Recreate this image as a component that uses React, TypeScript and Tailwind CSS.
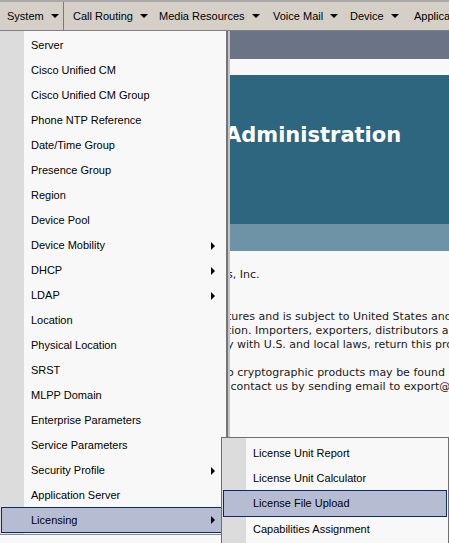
import React from "react";

const menuFont = { fontFamily: '"Liberation Sans", Arial, sans-serif' };
const pageFont = { fontFamily: '"DejaVu Sans", Verdana, sans-serif' };

function DownArrow() {
  return <span className="inline-block w-0 h-0 border-x-[4px] border-x-transparent border-t-[4px] border-t-black" />;
}
function RightArrow() {
  return <span className="inline-block w-0 h-0 border-y-[4px] border-y-transparent border-l-[4px] border-l-black" />;
}

const topItems = [
  { label: "System", w: "w-[64px]", pl: "pl-[7px]", active: true },
  { label: "Call Routing", w: "w-[86px]", pl: "pl-[9px]" },
  { label: "Media Resources", w: "w-[114px]", pl: "pl-[9px]" },
  { label: "Voice Mail", w: "w-[77px]", pl: "pl-[9px]" },
  { label: "Device", w: "w-[64px]", pl: "pl-[9px]" },
  { label: "Application", w: "w-[110px]", pl: "pl-[9px]" },
];

const systemItems: { label: string; sub?: boolean; active?: boolean }[] = [
  { label: "Server" },
  { label: "Cisco Unified CM" },
  { label: "Cisco Unified CM Group" },
  { label: "Phone NTP Reference" },
  { label: "Date/Time Group" },
  { label: "Presence Group" },
  { label: "Region" },
  { label: "Device Pool" },
  { label: "Device Mobility", sub: true },
  { label: "DHCP", sub: true },
  { label: "LDAP", sub: true },
  { label: "Location" },
  { label: "Physical Location" },
  { label: "SRST" },
  { label: "MLPP Domain" },
  { label: "Enterprise Parameters" },
  { label: "Service Parameters" },
  { label: "Security Profile", sub: true },
  { label: "Application Server" },
  { label: "Licensing", sub: true, active: true },
];

const licItems = [
  { label: "License Unit Report" },
  { label: "License Unit Calculator" },
  { label: "License File Upload", active: true },
  { label: "Capabilities Assignment" },
];

function Line({ hidden, visible }: { hidden: string; visible: string }) {
  return (
    <div className="flex h-[14px] leading-[14px] whitespace-nowrap">
      <div className="w-[227px] shrink-0 overflow-hidden flex justify-end">
        <span className="shrink-0">{hidden}</span>
      </div>
      <span className="whitespace-pre">{visible}</span>
    </div>
  );
}

export default function App() {
  return (
    <div className="relative w-[449px] h-[543px] overflow-hidden bg-[#f8f8f8]">
      {/* menu bar */}
      <div
        className="flex h-[31px] bg-[#d4d0c8] border-t-2 border-t-[#a8a8a8] border-b border-b-[#808080] text-[11px] text-black whitespace-nowrap"
        style={menuFont}
      >
        {topItems.map((it) => (
          <div
            key={it.label}
            className={`${it.w} ${it.pl} shrink-0 flex items-center gap-[7px] ${
              it.active ? "border-r border-r-[#7a7a7a]" : ""
            }`}
          >
            <span>{it.label}</span>
            <DownArrow />
          </div>
        ))}
      </div>

      {/* page content */}
      <div style={pageFont}>
        <div className="h-[28px] bg-[#6b7487]" />
        <div className="h-[16px] bg-[#f8f8f8]" />
        <div className="h-[149px] bg-[#2e6680] pt-[48px] text-white font-bold text-[21px] leading-[24px]">
          <div className="flex whitespace-nowrap">
            <div className="w-[225px] shrink-0 overflow-hidden flex justify-end">
              <span className="shrink-0">Cisco Unified CM&nbsp;</span>
            </div>
            <span>Administration</span>
          </div>
        </div>
        <div className="h-[27px] bg-[#6e93a6]" />
        <div className="pt-[17px] text-[11px] text-[#1a1a1a]">
          <Line hidden="Copyright © 1999 - 2010 Cisco System" visible="s, Inc." />
          <div className="h-[28px]" />
          <Line hidden="This product contains cryptographic fea" visible="tures and is subject to United States and local country laws" />
          <Line hidden="third-party authority to import, export, distribute or use encryp" visible="tion. Importers, exporters, distributors and users are" />
          <Line hidden="By using this product you agree to compl" visible="y with U.S. and local laws, return this product immediately." />
          <div className="h-[14px]" />
          <Line hidden="A summary of U.S. laws governing Cisc" visible="o cryptographic products may be found at our website." />
          <Line hidden="If you require further assistance please" visible=" contact us by sending email to export@cisco.com." />
        </div>
      </div>

      {/* System dropdown */}
      <div
        className="absolute left-0 top-[31px] w-[228px] h-[504px] pt-[2px] border-r-2 border-r-[#757575] border-b border-b-[#8a8a8a] shadow-[2px_0_0_#c4c4c4] bg-[linear-gradient(to_right,#dcdcdc_24px,#f8f8f8_24px)] text-[11px] text-black"
        style={menuFont}
      >
        {systemItems.map((it) =>
          it.active ? (
            <div
              key={it.label}
              className="mx-[1px] h-[26px] -mt-[1px] flex items-center justify-between pl-[29px] pr-[9px] bg-[#b6bdd3] border border-[#0c2a6b]"
            >
              <span>{it.label}</span>
              {it.sub && <RightArrow />}
            </div>
          ) : (
            <div key={it.label} className="h-[25px] flex items-center justify-between pl-[31px] pr-[11px]">
              <span>{it.label}</span>
              {it.sub && <RightArrow />}
            </div>
          )
        )}
      </div>

      {/* Licensing submenu */}
      <div
        className="absolute left-[221px] top-[437px] w-[228px] h-[120px] pt-[3px] border border-[#6f6f6f] bg-[linear-gradient(to_right,#dcdcdc_24px,#f8f8f8_24px)] text-[11px] text-black"
        style={menuFont}
      >
        {licItems.map((it) =>
          it.active ? (
            <div
              key={it.label}
              className="mx-[1px] h-[27px] -mt-[1px] flex items-center pl-[29px] bg-[#b6bdd3] border border-[#0c2a6b]"
            >
              <span>{it.label}</span>
            </div>
          ) : (
            <div key={it.label} className="h-[25px] flex items-center pl-[31px]">
              <span>{it.label}</span>
            </div>
          )
        )}
      </div>
    </div>
  );
}
